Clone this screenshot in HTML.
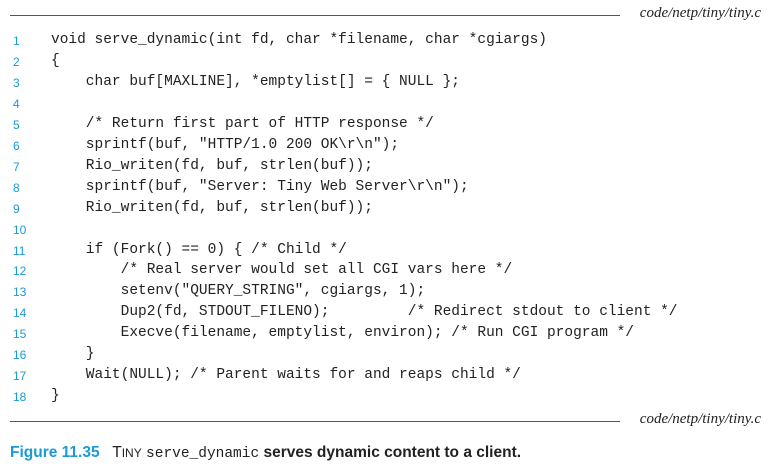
<!DOCTYPE html>
<html><head><style>
body{margin:0;width:769px;height:475px;background:#fff;position:relative;overflow:hidden;font-family:"Liberation Sans",sans-serif;}
.rule{position:absolute;left:10px;height:1px;background:#555;}
.path{position:absolute;right:8px;font-family:"Liberation Serif",serif;font-style:italic;font-size:15px;color:#222;}
.ln{position:absolute;left:13px;font-size:12px;color:#1a9ad6;}
.code{position:absolute;left:51px;font-family:"Liberation Mono",monospace;font-size:14.5px;color:#222;white-space:pre;}
.cap{position:absolute;left:10px;top:444px;font-size:15.5px;color:#222;white-space:pre;}
</style></head><body>
<div class="rule" style="top:15px;width:610px"></div>
<div class="path" style="top:5px">code/netp/tiny/tiny.c</div>
<div class="rule" style="top:421px;width:610px"></div>
<div class="path" style="top:411px">code/netp/tiny/tiny.c</div>
<div id="c"></div>
<script>
var L=["void serve_dynamic(int fd, char *filename, char *cgiargs)","{","    char buf[MAXLINE], *emptylist[] = { NULL };","","    /* Return first part of HTTP response */","    sprintf(buf, \"HTTP/1.0 200 OK\\r\\n\");","    Rio_writen(fd, buf, strlen(buf));","    sprintf(buf, \"Server: Tiny Web Server\\r\\n\");","    Rio_writen(fd, buf, strlen(buf));","","    if (Fork() == 0) { /* Child */","        /* Real server would set all CGI vars here */","        setenv(\"QUERY_STRING\", cgiargs, 1);","        Dup2(fd, STDOUT_FILENO);         /* Redirect stdout to client */","        Execve(filename, emptylist, environ); /* Run CGI program */","    }","    Wait(NULL); /* Parent waits for and reaps child */","}"];
var h="";
for(var i=0;i<18;i++){var t=32+i*20.95;
h+='<div class="ln" style="top:'+(t+2)+'px">'+(i+1)+'</div>';
var d=document.createElement('div');d.textContent=L[i];
h+='<div class="code" style="top:'+t+'px">'+d.innerHTML+'</div>';}
document.getElementById('c').innerHTML=h;
</script>
<div class="cap"><span style="color:#1a9ad6;font-weight:bold">Figure 11.35</span>   T<span style="font-size:12px">INY</span> <span style="font-family:'Liberation Mono',monospace;font-size:14.5px">serve_dynamic</span> <b>serves dynamic content to a client.</b></div>
</body></html>
